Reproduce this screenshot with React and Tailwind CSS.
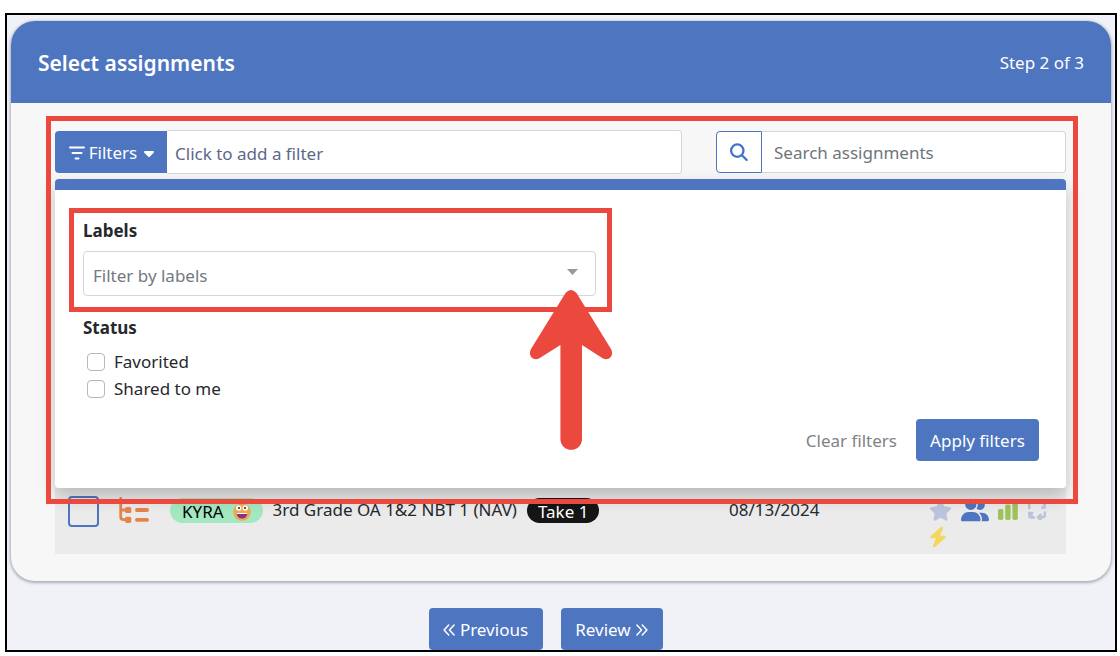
import React from "react";
import { FaCaretDown, FaStar, FaUserGroup, FaBolt } from "react-icons/fa6";

function FilterIcon() {
  return (
    <svg viewBox="0 0 16 14" className="h-[14px] w-4" fill="none" stroke="currentColor" strokeWidth="2" strokeLinecap="round" aria-hidden="true">
      <path d="M1 1.5h14M3.5 7h9M6.5 12.5h3" />
    </svg>
  );
}

function SearchIcon() {
  return (
    <svg viewBox="0 0 20 20" className="size-5" fill="none" stroke="currentColor" strokeWidth="2.3" strokeLinecap="round" aria-hidden="true">
      <circle cx="8.3" cy="8.600" r="6.2" />
      <path d="M12.9 13.200l4.800 4.800" />
    </svg>
  );
}

function Chevrons({ flip }) {
  return (
    <svg viewBox="0 0 13 13" className="size-3" fill="none" stroke="currentColor" strokeWidth="1.6" strokeLinecap="round" strokeLinejoin="round" aria-hidden="true">
      {flip ? <path d="M1 1l5 5.5-5 5.5M6.8 1l5 5.5-5 5.5" /> : <path d="M6.2 1l-5 5.5 5 5.5M12 1L7 6.5l5 5.5" />}
    </svg>
  );
}

function TreeIcon() {
  return (
    <svg viewBox="0 0 31 27" className="h-[27px] w-[31px] text-[#e58449]" fill="currentColor" aria-hidden="true">
      <path d="M2.7 1.500v18q0 3.200 2.800 3.200H8M2.7 13H8" fill="none" stroke="currentColor" strokeWidth="2.8" strokeLinecap="round" />
      <rect x="7" y="9.900" width="6.300" height="6.200" rx="1.7" />
      <rect x="7" y="19.700" width="6.300" height="6.200" rx="1.7" />
      <rect x="17" y="11.100" width="14" height="3.800" rx="1.9" />
      <rect x="17" y="20.900" width="14" height="3.800" rx="1.9" />
    </svg>
  );
}

function FaceIcon() {
  return (
    <svg viewBox="0 0 18 18" className="size-[18px]" aria-hidden="true">
      <circle cx="9" cy="9" r="8.8" fill="#efa94f" />
      <path d="M3.6 10h10.8q-.6 5.6-5.4 5.6t-5.4-5.6z" fill="#8c2f7e" />
      <path d="M3.7 10h10.6l-.3 1H4z" fill="#fff" />
      <circle cx="5.7" cy="5" r="2.7" fill="#fff" />
      <circle cx="12.300" cy="5" r="2.7" fill="#fff" />
      <circle cx="6" cy="5.1" r="1" fill="#222" />
      <circle cx="12" cy="5.1" r="1" fill="#222" />
    </svg>
  );
}

function ChartIcon() {
  return (
    <svg viewBox="0 0 20 20" className="size-5 text-[#9fc25c]" fill="currentColor" aria-hidden="true">
      <rect x="0" y="9" width="5.4" height="11" rx="1.7" />
      <rect x="7.200" y="4.500" width="5.4" height="15.500" rx="1.7" />
      <rect x="14.400" y="0" width="5.4" height="20" rx="1.7" />
    </svg>
  );
}

function CycleIcon() {
  return (
    <svg viewBox="0 0 20 20" className="size-5 text-[#bcc3dd]" fill="none" stroke="currentColor" strokeWidth="2.4" strokeLinejoin="round" aria-hidden="true">
      <path d="M2.2 9.300V4.700q0-2 2-2H8M17.800 4v2.200M11.500 2.700h3.300q2.600 0 3 2.600M2.200 13v2.600q0 2 2 2H8M11.500 17.300h4q2.300 0 2.300-2.300v-3.500" />
      <path d="M1 13h5.300M2 13.200l4.500 4.300M18.800 7.500h-4.500M10.800 17.300l2.700-2.600v5z" />
    </svg>
  );
}

const button = "flex items-center justify-center rounded bg-[#4e75c0] pt-0.5 text-white";

export default function App() {
  return (
    <div className="flex min-h-screen flex-col bg-white pt-[13px] pr-[3px] pb-1 pl-[5px] font-['Noto_Sans',sans-serif] text-[17px] leading-6 text-[#25282c]">
      <div className="flex grow flex-col border-2 border-black bg-[#f0f2f8] px-1 pt-[6px]">
        <main className="rounded-3xl bg-[#f7f7f7] shadow-[0_1px_3px_1px_#a9adb5]">
          <header className="flex h-[82px] items-center justify-between rounded-t-3xl bg-[#4e75c0] px-[27px] pt-0.5 text-white">
            <h1 className="text-[21px] font-semibold">Select assignments</h1>
            <span>Step 2 of 3</span>
          </header>

          <div className="py-[27px] pr-[45px] pl-11">
            <section className="relative z-10" aria-label="Assignment filters">
              <div className="flex items-center gap-[34px]">
                <div className="flex grow items-center">
                  <button type="button" className="flex h-[42px] w-28 shrink-0 items-center justify-center gap-1 rounded-l bg-[#4e75c0] pt-0.5 pl-1 text-white">
                    <FilterIcon />
                    Filters
                    <FaCaretDown className="size-4" />
                  </button>
                  <input
                    type="text"
                    aria-label="Add a filter"
                    placeholder="Click to add a filter"
                    className="h-11 min-w-0 grow rounded-r border border-l-0 border-[#d3d6dd] bg-white px-2 pt-0.5 placeholder:text-[#5d6788]"
                  />
                </div>
                <div className="flex w-[350px] items-center">
                  <button type="button" aria-label="Search" className="flex h-[42px] w-[46px] shrink-0 items-center justify-center rounded-l border border-[#4e75c0] bg-white text-[#4171c8]">
                    <SearchIcon />
                  </button>
                  <input
                    type="search"
                    aria-label="Search assignments"
                    placeholder="Search assignments"
                    className="h-[42px] min-w-0 grow rounded-r border border-l-0 border-[#d3d6dd] bg-white px-3 placeholder:text-[#6f757c]"
                  />
                </div>
              </div>

              <form className="mt-[5px] rounded border-t-[11px] border-[#4e75c0] bg-white pt-[29px] pr-[27px] pb-[27px] pl-7 shadow-[0_8px_18px_rgba(0,0,0,0.22)]">
                <div className="relative w-[513px]">
                  <label htmlFor="labels" className="block font-bold">Labels</label>
                  <div className="relative mt-2">
                    <select id="labels" defaultValue="" className="h-[45px] w-full appearance-none rounded border border-[#d3d6dd] bg-white px-[9px] pt-1 text-[#74797f]">
                      <option value="">Filter by labels</option>
                    </select>
                    <svg viewBox="0 0 11 6" className="pointer-events-none absolute top-[18px] right-[18px] h-[6px] w-[11px]" aria-hidden="true">
                      <path d="M0 0h11L5.500 6z" fill="#999" />
                    </svg>
                  </div>
                  <div className="pointer-events-none absolute -top-[11px] -right-4 -bottom-4 -left-[14px] border-[5px] border-[#ec493e]" />
                  <svg viewBox="0 0 82 160" className="pointer-events-none absolute top-[71px] -right-4 z-10 h-40 w-[82px]" fill="#ec493e" aria-hidden="true">
                    <path d="M35.500 3Q41 -3 46.500 3L81 59Q84 65 79 68.500Q76 70 73 68.500L52 55V149A10.800 10.800 0 0 1 30.400 149V55L9 68.500Q6 70 3 68.500Q-2 65 1 59Z" />
                  </svg>
                </div>

                <fieldset className="mt-5">
                  <legend className="font-bold">Status</legend>
                  <div className="flex flex-col gap-[3px] pt-[10px] pl-1">
                    {["Favorited", "Shared to me"].map((name) => (
                      <label key={name} className="flex items-center gap-[9px]">
                        <input type="checkbox" className="size-[18px] appearance-none rounded border border-[#b4b8bf] bg-white" />
                        {name}
                      </label>
                    ))}
                  </div>
                </fieldset>

                <div className="mt-[18px] flex items-center justify-end gap-[19px]">
                  <button type="reset" className="pt-0.5 text-[#808386]">Clear filters</button>
                  <button type="button" className={`${button} h-[42px] w-[123px]`}>Apply filters</button>
                </div>
              </form>
              <div className="pointer-events-none absolute -top-[14px] -right-3 -bottom-4 -left-[9px] border-[5px] border-[#ec493e]" />
            </section>

            <table className="w-full table-fixed bg-[#ebebeb]">
              <tbody>
                <tr className="h-[66px] align-top">
                  <td className="w-[63px] pt-2 pl-[13px]">
                    <input type="checkbox" aria-label="Select 3rd Grade OA 1&2 NBT 1 (NAV)" className="block size-[31px] appearance-none rounded border-2 border-[#4e75c0]" />
                  </td>
                  <td className="w-[52px] pt-[9px]"><TreeIcon /></td>
                  <td className="pt-[10px]">
                    <div className="flex items-start gap-[10px]">
                      <span className="flex h-[25px] items-center gap-[9px] rounded-full bg-[#a3e8c1] px-3 pt-[3px] text-black">
                        KYRA <FaceIcon />
                      </span>
                      <span>3rd Grade OA 1&amp;2 NBT 1 (NAV)</span>
                      <span className="flex h-[25px] items-center rounded-full bg-[#151515] px-[11px] pt-[3px] text-white">Take 1</span>
                    </div>
                  </td>
                  <td className="w-[200px] pt-[10px]">08/13/2024</td>
                  <td className="w-[137px] pt-2">
                    <div className="flex flex-wrap items-center gap-x-[9px] gap-y-0.5">
                      <FaStar className="size-[23px] text-[#bcc3dd]" />
                      <FaUserGroup className="size-7 text-[#4e75c0]" />
                      <ChartIcon />
                      <CycleIcon />
                      <span className="basis-full">
                        <FaBolt className="h-[22px] w-[18px] text-[#f3d65b]" />
                      </span>
                    </div>
                  </td>
                </tr>
              </tbody>
            </table>
          </div>
        </main>

        <nav className="mt-[27px] flex justify-center gap-[18px] pr-[31px]">
          <button type="button" className={`${button} h-[42px] w-[114px] gap-[5px]`}>
            <Chevrons />
            Previous
          </button>
          <button type="button" className={`${button} h-[42px] w-[102px] gap-[5px]`}>
            Review
            <Chevrons flip />
          </button>
        </nav>
      </div>
    </div>
  );
}
